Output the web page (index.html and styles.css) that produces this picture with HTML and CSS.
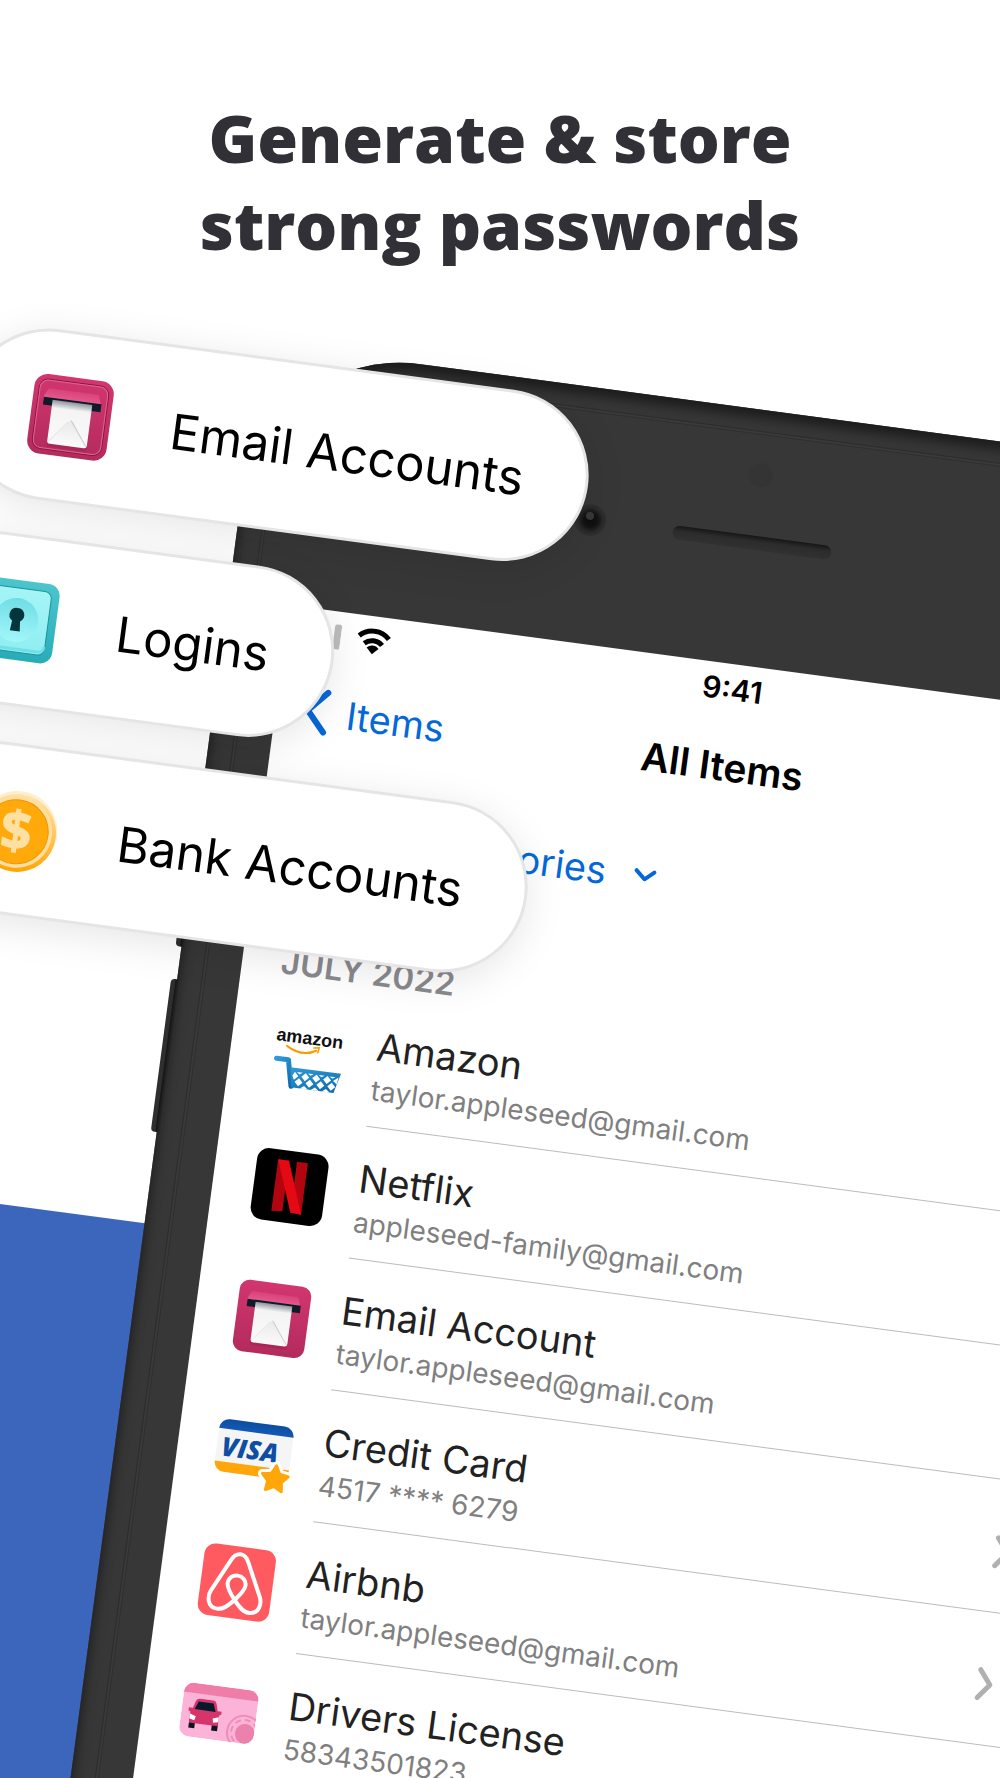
FILE: index.html
```html
<!DOCTYPE html>
<html lang="en">
<head>
<meta charset="utf-8">
<meta name="viewport" content="width=device-width, initial-scale=1">
<title>Generate &amp; store strong passwords</title>
<link rel="stylesheet" href="styles.css">
</head>
<body>
<svg class="defs" aria-hidden="true">
  <defs>
    <linearGradient id="pink" x1="0" y1="0" x2="0" y2="1"><stop offset="0" stop-color="#d2366f"/><stop offset="1" stop-color="#b32b5c"/></linearGradient>
    <linearGradient id="flap" x1="0" y1="0" x2="0" y2="1"><stop offset="0" stop-color="#d8437a"/><stop offset="1" stop-color="#e85c8e"/></linearGradient>
    <linearGradient id="paper" x1="0" y1="0" x2="0" y2="1"><stop offset="0" stop-color="#8d959c"/><stop offset=".18" stop-color="#f4f4f4"/><stop offset="1" stop-color="#fafafa"/></linearGradient>
    <linearGradient id="fold" x1="0" y1="0" x2="0" y2="1"><stop offset="0" stop-color="#e9e9e9"/><stop offset="1" stop-color="#fafafa"/></linearGradient>
    <linearGradient id="teal" x1="0" y1="0" x2="0" y2="1"><stop offset="0" stop-color="#4cc5cd"/><stop offset="1" stop-color="#27adb8"/></linearGradient>
    <linearGradient id="aqua" x1="0" y1="0" x2="0" y2="1"><stop offset="0" stop-color="#a5f4f6"/><stop offset="1" stop-color="#8feef2"/></linearGradient>
    <linearGradient id="dial" x1="0" y1="0" x2="0" y2="1"><stop offset="0" stop-color="#6fdde5"/><stop offset="1" stop-color="#a2f7fa"/></linearGradient>
    <linearGradient id="rim" x1="0" y1="0" x2="0" y2="1"><stop offset="0" stop-color="#ffe3ae"/><stop offset="1" stop-color="#ffa400"/></linearGradient>
    <linearGradient id="visa-top" x1="0" y1="0" x2="0" y2="1"><stop offset="0" stop-color="#0b4ea2"/><stop offset="1" stop-color="#1458b4"/></linearGradient>
    <linearGradient id="cart" x1="0" y1="0" x2="1" y2="1"><stop offset="0" stop-color="#2f9ad8"/><stop offset="1" stop-color="#0d68a8"/></linearGradient>
    <radialGradient id="lens"><stop offset="0" stop-color="#0c0c0c"/><stop offset=".45" stop-color="#131313"/><stop offset=".8" stop-color="#2b2b2b"/><stop offset="1" stop-color="#303030"/></radialGradient>
    <linearGradient id="slot" x1="0" y1="0" x2="0" y2="1"><stop offset="0" stop-color="#161616"/><stop offset=".4" stop-color="#2c2c2c"/><stop offset="1" stop-color="#313131"/></linearGradient>
    <symbol id="mail" viewBox="0 0 80 80">
      <path d="M11 21 15 14h50l4 11H11z" fill="url(#flap)"/>
      <rect x="11" y="23" width="58" height="8" fill="#0e1b28"/>
      <path d="M20 72v-6h40v6z" fill="#8f1f48" opacity=".35"/>
      <path d="M20 25h40v41q0 3-3 3H23q-3 0-3-3z" fill="url(#paper)"/>
      <path d="M21 68 38 45q3-3 6 0L59 68z" fill="url(#fold)"/>
      <path d="M41 43 59 67" stroke="#c9c9c9" fill="none"/>
      <path d="M38 45 21 67" stroke="#e6e6e6" fill="none"/>
    </symbol>
    <symbol id="chevron" viewBox="0 0 18 34"><path d="M4 3 15 17 4 31" fill="none" stroke="#b0b0b0" stroke-width="5" stroke-linecap="round" stroke-linejoin="round"/></symbol>
  </defs>
</svg>

<main class="poster">
  <h1 class="headline">Generate &amp; store<br>strong passwords</h1>

  <div class="scene">
    <div class="band"></div>

    <section class="phone" aria-label="Phone">
      <span class="side-button side-button-up"></span>
      <span class="side-button side-button-down"></span>
      <svg class="hardware" viewBox="0 0 900 256" aria-hidden="true">
        <circle cx="450" cy="65" r="12" fill="#343434"/>
        <circle cx="287" cy="132" r="16" fill="url(#lens)"/>
        <circle cx="286" cy="128" r="4" fill="#4a4a4a" opacity=".7"/>
        <rect x="370" y="126" width="160" height="14" rx="7" fill="url(#slot)"/>
      </svg>

      <div class="screen">
        <div class="status">
          <div class="signal">
            <svg width="40" height="26" viewBox="0 0 40 26" aria-label="Signal"><rect x="0" y="16" width="6" height="10" rx="2"/><rect x="11" y="11" width="6" height="15" rx="2"/><rect x="22" y="6" width="6" height="20" rx="2"/><rect x="33" y="1" width="7" height="25" rx="2" fill="#bdbdbd"/></svg>
            <svg width="34" height="26" viewBox="0 0 34 26" aria-label="Wi-Fi"><g fill="none" stroke="#000" stroke-width="5"><path d="M2 9a21 21 0 0 1 30 0"/><path d="M8 16a13 13 0 0 1 18 0"/></g><path d="M17 26l-6-6a8 8 0 0 1 12 0z"/></svg>
          </div>
          <time class="time">9:41</time>
        </div>

        <nav class="nav">
          <a class="back" href="#items"><svg width="26" height="48" viewBox="0 0 26 48" aria-hidden="true"><path d="M22 4 4 24l18 20" fill="none" stroke="#0568d8" stroke-width="6" stroke-linecap="round" stroke-linejoin="round"/></svg>Items</a>
          <h2 class="title">All Items</h2>
        </nav>

        <div class="filter">
          <button class="filter-button" type="button">All Categories<svg width="24" height="15" viewBox="0 0 24 15" aria-hidden="true"><path d="M3 3l9 8 9-8" fill="none" stroke="#0568d8" stroke-width="4" stroke-linecap="round" stroke-linejoin="round"/></svg></button>
        </div>

        <h3 class="month">JULY 2022</h3>
        <ul class="items">
          <li><a class="item" href="#amazon">
            <svg class="item-icon" viewBox="0 0 72 72" aria-hidden="true">
              <text class="amazon-word" x="3" y="25">amazon</text>
              <path d="M14 29q17 10 31 1" fill="none" stroke="#f90" stroke-width="2"/><path d="M41 28l6-1-1 6" fill="none" stroke="#f90" stroke-width="1.5"/>
              <path d="M6 43h12l6 26" fill="none" stroke="url(#cart)" stroke-width="5" stroke-linecap="round" stroke-linejoin="round"/>
              <path d="M21 50h51l-5 20H24z" fill="url(#cart)"/>
              <g fill="#fff"><path d="M26 54l4 4-4 4-2-4zM37 54l4 4-4 4-4-4zM48 54l4 4-4 4-4-4zM59 54l4 4-4 4-4-4zM70 54l-1 7-4-3z"/><path d="M31 60l4 4-4 4-4-4zM42 60l4 4-4 4-4-4zM53 60l4 4-4 4-4-4zM64 60l4 4-4 4-4-4z"/><path d="M33 70l4-3 4 3zM44 70l4-3 4 3zM55 70l4-3 4 3zM28 54h6l-3 2zM39 54h6l-3 2zM50 54h6l-3 2zM61 54h6l-3 2z"/></g>
            </svg>
            <span class="item-body"><span class="item-name">Amazon</span><span class="item-sub">taylor.appleseed@gmail.com</span><svg class="item-go" aria-hidden="true"><use href="#chevron"/></svg></span>
          </a></li>
          <li><a class="item" href="#netflix">
            <svg class="item-icon" viewBox="0 0 72 72" aria-hidden="true"><rect width="72" height="72" rx="12"/><path d="M21 10h11v51l-11 1zM40 10h11v52l-11-1z" fill="#b1060f"/><path d="M21 10h11l19 52-11-1z" fill="#e50914"/></svg>
            <span class="item-body"><span class="item-name">Netflix</span><span class="item-sub">appleseed-family@gmail.com</span><svg class="item-go" aria-hidden="true"><use href="#chevron"/></svg></span>
          </a></li>
          <li><a class="item" href="#email">
            <svg class="item-icon" viewBox="0 0 72 72" aria-hidden="true"><rect width="72" height="72" rx="10" fill="url(#pink)"/><use href="#mail" x="-1" y="-2" width="74" height="74"/></svg>
            <span class="item-body"><span class="item-name">Email Account</span><span class="item-sub">taylor.appleseed@gmail.com</span><svg class="item-go" aria-hidden="true"><use href="#chevron"/></svg></span>
          </a></li>
          <li><a class="item" href="#card">
            <svg class="item-icon" viewBox="0 0 72 72" aria-hidden="true">
              <rect x="-2" y="8" width="75" height="53" rx="10" fill="#f5f5f6"/>
              <path d="M-2 18a10 10 0 0 1 10-10h55a10 10 0 0 1 10 10z" fill="url(#visa-top)"/>
              <path d="M-2 51h75a10 10 0 0 1-10 10H8a10 10 0 0 1-10-10z" fill="#ffa60a"/>
              <text class="visa-word" x="3" y="45">VISA</text>
              <path d="M60 48l4 8 9 1.500-6 6.500 1 9-8-4-8 4 1-9-6-6.500 9-1.500z" fill="#fff" stroke="#fff" stroke-width="9" stroke-linejoin="round"/>
              <path d="M60 48l4 8 9 1.500-6 6.500 1 9-8-4-8 4 1-9-6-6.500 9-1.500z" fill="#ffa60a" stroke="#ffa60a" stroke-width="3" stroke-linejoin="round"/>
            </svg>
            <span class="item-body"><span class="item-name">Credit Card</span><span class="item-sub">4517 **** 6279</span><svg class="item-go" aria-hidden="true"><use href="#chevron"/></svg></span>
          </a></li>
          <li><a class="item" href="#airbnb">
            <svg class="item-icon" viewBox="0 0 72 72" aria-hidden="true"><rect width="72" height="72" rx="11" fill="#ff5a5f"/><path d="M36 7.500c4 0 6.500 2.500 8.500 6.500l16 33c3 6 2 17-8 17.500-6 .5-11-4.500-16.500-11-5-6-9-11-9-15.500 0-5.500 4-9 9-9s9 3.500 9 9c0 4.500-4 9.500-9 15.500-5.500 6.500-10.500 11.500-16.500 11-10-.5-11-11.500-8-17.500l16-33c2-4 4.500-6.500 8.500-6.500z" fill="none" stroke="#fff" stroke-width="4"/></svg>
            <span class="item-body"><span class="item-name">Airbnb</span><span class="item-sub">taylor.appleseed@gmail.com</span><svg class="item-go" aria-hidden="true"><use href="#chevron"/></svg></span>
          </a></li>
          <li><a class="item" href="#license">
            <svg class="item-icon" viewBox="0 0 72 72" aria-hidden="true">
              <clipPath id="license-card"><rect x="-2" y="8" width="75" height="54" rx="10"/></clipPath>
              <g clip-path="url(#license-card)"><rect x="-2" y="8" width="75" height="54" fill="#fbb3d8"/><rect x="-2" y="8" width="75" height="10" fill="#f07ca8"/>
              <g fill="none" stroke="#ee8db8"><circle cx="63" cy="51" r="17" stroke-width="2"/><circle cx="63" cy="51" r="13" stroke-width="2" stroke-dasharray="6 4"/></g><circle cx="64" cy="52" r="10" fill="#ea82ad"/></g>
              <g transform="translate(-1 -2)">
              <path d="M8 46h6v9H8zM31 46h6v9h-6z" fill="#0b1420"/>
              <path d="M12 28q1-3 4-3h13q3 0 4 3l2 7h4v3l-2 1v11H8V39l-2-1v-3h4z" fill="#d6356b"/>
              <path d="M15 28h15l3 8H12z" fill="#071a2b"/><path d="M8 41l6 2-1 4-5-1zM37 41l-6 2 1 4 5-1z" fill="#fff"/></g>
            </svg>
            <span class="item-body"><span class="item-name">Drivers License</span><span class="item-sub">58343501823</span><svg class="item-go" aria-hidden="true"><use href="#chevron"/></svg></span>
          </a></li>
        </ul>
      </div>
    </section>

    <div class="pills">
      <div class="pill pill-email">
        <svg class="pill-icon" viewBox="0 0 80 80" aria-hidden="true"><rect width="80" height="80" rx="13" fill="url(#pink)"/><rect x="5" y="5" width="70" height="70" rx="9" fill="none" stroke="#84193f"/><rect x="6" y="6" width="68" height="68" rx="8" fill="none" stroke="#e0648f"/><use href="#mail"/></svg>
        Email Accounts
      </div>
      <div class="pill pill-logins">
        <svg class="pill-icon" viewBox="0 0 80 80" aria-hidden="true"><rect width="80" height="80" rx="12" fill="url(#teal)"/><rect x="8" y="8" width="64" height="64" rx="7" fill="url(#aqua)" stroke="#1e929c"/><path d="M9 63q0 6 6 6h50q6 0 6-6" fill="none" stroke="#70e0e6" stroke-width="3"/><circle cx="40" cy="40" r="22" fill="url(#dial)"/><path d="M40 28a7 7 0 0 1 4 13l1 10H35l1-10a7 7 0 0 1 4-13z" fill="#03363c"/></svg>
        Logins
      </div>
      <div class="pill pill-bank">
        <svg class="pill-icon" viewBox="0 0 80 80" aria-hidden="true"><circle cx="40" cy="41" r="40" fill="#ffefcf"/><circle cx="40" cy="43" r="39" fill="url(#rim)"/><circle cx="39" cy="42" r="36" fill="#ffdfa0"/><circle cx="39" cy="42" r="32" fill="#ffa90a" stroke="#f09500"/><text class="coin-mark" x="39" y="60">$</text></svg>
        Bank Accounts
      </div>
    </div>
  </div>
</main>
</body>
</html>
```
FILE: styles.css
```css
* { box-sizing: border-box; }

body {
  margin: 0;
  background: #fff;
  font-family: Inter, "Liberation Sans", sans-serif;
  color: #000;
}

.defs { position: absolute; width: 0; height: 0; }

.poster {
  height: 100vh;
  overflow: hidden;
}

.headline {
  margin: 0;
  padding: 94px 0 75px;
  text-align: center;
  font: 800 66px/87px "Open Sans", sans-serif;
  color: #303036;
}

/* Everything below the headline shares one tilt. */
.scene {
  position: relative;
  width: 1024px;
  margin-left: 262px;
  transform: rotate(7.6deg);
  transform-origin: 0 0;
}

.band {
  position: absolute;
  top: 888px;
  left: -600px;
  width: 1000px;
  height: 1000px;
  background: #3c66bc;
}

.phone {
  position: relative;
  padding: 256px 62px;
  border-radius: 160px;
  background: #373737;
  box-shadow: inset 0 14px 12px -6px #1c1c1c, inset 8px 0 12px -6px #222;
}

.phone::before {
  content: "";
  position: absolute;
  inset: 21px 24px;
  border: 1px solid #2d2d2d;
  border-radius: 138px;
  box-shadow: inset 0 0 0 2px #3a3a3a, inset 0 0 0 3px #2f2f2f;
}

.hardware {
  position: absolute;
  top: 0;
  left: 62px;
  width: 900px;
  height: 256px;
}

.side-button {
  position: absolute;
  left: -6px;
  width: 10px;
  height: 154px;
  border-radius: 4px 0 0 4px;
  background: linear-gradient(90deg, #2f2f2f 40%, #161616 50%, #303030);
}

.side-button-up { top: 455px; }
.side-button-down { top: 642px; }

.screen {
  position: relative;
  min-height: 1500px;
  background: #fff;
}

.status {
  display: grid;
  grid-template-columns: 1fr auto 1fr;
  align-items: center;
  height: 49px;
  padding: 0 15px;
}

.signal { display: flex; gap: 16px; }

.time { font-size: 30px; font-weight: 600; }

.nav {
  display: grid;
  grid-template-columns: 1fr auto 1fr;
  align-items: center;
  height: 106px;
  padding: 0 28px;
}

.back {
  display: flex;
  align-items: center;
  gap: 17px;
  font-size: 38px;
  color: #0568d8;
  text-decoration: none;
}

.title {
  margin: 0;
  font-size: 39px;
  font-weight: 600;
}

.filter {
  display: flex;
  align-items: center;
  width: 400px;
  height: 132px;
  justify-content: flex-end;
}

.filter-button {
  display: flex;
  align-items: center;
  gap: 27px;
  padding: 0;
  border: 0;
  background: none;
  font: 400 38px/48px Inter, sans-serif;
  color: #0568d8;
  white-space: nowrap;
}

.month {
  margin: 0;
  padding: 47px 39px 0;
  font-size: 33px;
  line-height: 40px;
  font-weight: 600;
  color: #8a8a8e;
}

.items {
  margin: 0;
  padding: 0;
  list-style: none;
}

.item {
  display: flex;
  gap: 32px;
  height: 133px;
  padding-left: 41px;
  color: #222;
  text-decoration: none;
}

.item-icon {
  flex: none;
  width: 72px;
  height: 72px;
  margin-top: 34px;
  overflow: visible;
}

.item-body {
  flex: 1;
  display: grid;
  grid-template-columns: 1fr 18px;
  grid-template-rows: 48px 40px;
  padding: 28px 60px 16px 0;
  border-bottom: 1px solid #bbb;
}

.item-name { grid-column: 1; font-size: 38px; line-height: 48px; }
.item-sub { grid-column: 1; font-size: 28px; line-height: 40px; color: #808080; }

.item-go {
  grid-column: 2;
  grid-row: 1 / 3;
  align-self: center;
  width: 18px;
  height: 34px;
}

.amazon-word { font: bold 18px "Liberation Sans", sans-serif; fill: #111; }
.visa-word { font: italic 800 26px "Open Sans", sans-serif; fill: #0e4fa5; }
.coin-mark { font: 800 54px "Open Sans", sans-serif; fill: #ffe0a3; text-anchor: middle; }

.pills {
  position: absolute;
  top: 13px;
  left: 0;
  display: flex;
  flex-direction: column;
  align-items: flex-start;
  gap: 36px;
}

.pill {
  display: flex;
  align-items: center;
  gap: 61px;
  height: 172px;
  padding: 0 62px 0 65px;
  border: 3px solid #e5e5e7;
  border-radius: 86px;
  background: #fff;
  box-shadow: 0 8px 40px rgba(0, 0, 0, .1);
  font-size: 49px;
  white-space: nowrap;
}

.pill-icon { width: 80px; height: 80px; overflow: visible; }

.pill-email { margin-left: -288px; }
.pill-logins { margin-left: -315px; }
.pill-bank { margin-left: -286px; }
```
